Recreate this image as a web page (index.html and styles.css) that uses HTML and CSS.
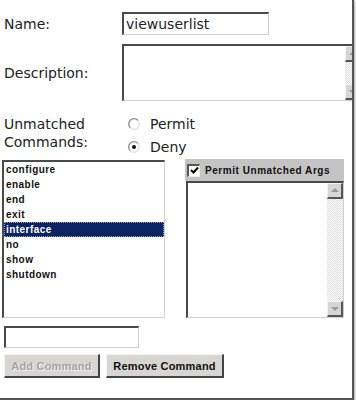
FILE: index.html
```html
<!DOCTYPE html>
<html lang="en">
<head>
  <meta charset="UTF-8">
  <title>Command Set</title>
  <link rel="stylesheet" href="styles.css">
</head>
<body>
  <div class="marco">
    <div class="fila fila-nombre">
      <span class="etiqueta">Name:</span>
      <input class="campo campo-nombre" type="text" value="viewuserlist">
    </div>

    <div class="fila fila-desc">
      <span class="etiqueta">Description:</span>
      <div class="area">
        <div class="barra">
          <span class="flecha arriba"></span>
          <span class="pista"></span>
          <span class="flecha abajo"></span>
        </div>
      </div>
    </div>

    <div class="fila fila-radios">
      <span class="etiqueta etiqueta-doble">Unmatched<br>Commands:</span>
      <div class="radios">
        <div class="opcion">
          <svg class="radio" width="12" height="12" viewBox="0 0 12 12">
            <defs>
              <linearGradient id="rg" x1="0" y1="0" x2="1" y2="1">
                <stop offset="0.45" stop-color="#8a8a8a"/>
                <stop offset="0.55" stop-color="#e2e2e2"/>
              </linearGradient>
            </defs>
            <circle cx="6" cy="6" r="5.3" fill="#fff" stroke="url(#rg)" stroke-width="1.3"/>
          </svg>
          <span>Permit</span>
        </div>
        <div class="opcion">
          <svg class="radio" width="12" height="12" viewBox="0 0 12 12">
            <circle cx="6" cy="6" r="5.3" fill="#fff" stroke="url(#rg)" stroke-width="1.3"/>
            <circle cx="6" cy="6" r="2" fill="#111"/>
          </svg>
          <span>Deny</span>
        </div>
      </div>
    </div>

    <div class="listas">
      <div class="lista">
        <div class="item">configure</div>
        <div class="item">enable</div>
        <div class="item">end</div>
        <div class="item">exit</div>
        <div class="item sel">interface</div>
        <div class="item">no</div>
        <div class="item">show</div>
        <div class="item">shutdown</div>
      </div>

      <div class="args">
        <div class="args-cab">
          <span class="check">
            <svg width="9" height="9" viewBox="0 0 9 9"><path d="M1 4 L3.5 6.5 L8 1.5" fill="none" stroke="#000" stroke-width="2"/></svg>
          </span>
          <span>Permit Unmatched Args</span>
        </div>
        <div class="args-caja">
          <div class="barra barra-larga">
            <span class="flecha arriba"></span>
            <span class="pista"></span>
            <span class="flecha abajo"></span>
          </div>
        </div>
      </div>
    </div>

    <input class="campo campo-cmd" type="text">

    <div class="botones">
      <button class="boton desactivado" disabled>Add Command</button>
      <button class="boton">Remove Command</button>
    </div>
  </div>
</body>
</html>
```

FILE: styles.css
```css
body {
  margin: 0;
  background: #fff;
  font-family: "DejaVu Sans", Verdana, sans-serif;
  color: #222;
}
.marco {
  width: 352px;
  height: 398px;
  border-right: 2px solid #555;
  border-bottom: 2px solid #555;
  box-shadow: 1px 1px 2px rgba(0, 0, 0, 0.35);
  overflow: hidden;
  box-sizing: content-box;
}
.fila {
  display: flex;
  align-items: center;
}
.etiqueta {
  width: 122px;
  flex: none;
  padding-left: 4px;
  box-sizing: border-box;
  font-size: 14px;
}
.etiqueta-doble {
  align-self: flex-start;
  line-height: 18px;
  margin-top: 1px;
}
.campo {
  display: block;
  box-sizing: border-box;
  margin: 0;
  border-style: solid;
  border-width: 2px 1px 1px 2px;
  border-color: #4a4a4a #d0d0d0 #d0d0d0 #4a4a4a;
  background: #fff;
  font-family: "DejaVu Sans", Verdana, sans-serif;
  font-size: 14px;
  color: #222;
  padding: 0 2px;
  outline: none;
}
.fila-nombre {
  padding-top: 12px;
}
.campo-nombre {
  width: 147px;
  height: 23px;
}
.fila-desc {
  margin-top: 9px;
}
.area {
  width: 240px;
  height: 57px;
  flex: none;
  box-sizing: border-box;
  border-style: solid;
  border-width: 2px 1px 1px 2px;
  border-color: #4a4a4a #d0d0d0 #d0d0d0 #4a4a4a;
  display: flex;
  justify-content: flex-end;
}
.barra {
  width: 16px;
  display: flex;
  flex-direction: column;
  background: repeating-conic-gradient(#fff 0 25%, #dedede 0 50%) 0 0 / 2px 2px;
}
.pista {
  flex: 1;
}
.flecha {
  height: 16px;
  box-sizing: border-box;
  background: #d6d6d6;
  border-style: solid;
  border-width: 1px 2px 2px 1px;
  border-color: #f4f4f4 #555 #555 #f4f4f4;
  position: relative;
}
.flecha::after {
  content: "";
  position: absolute;
  left: 3px;
  top: 4px;
  border-left: 4px solid transparent;
  border-right: 4px solid transparent;
}
.arriba::after {
  border-bottom: 4px solid #9a9a9a;
}
.abajo::after {
  border-top: 4px solid #9a9a9a;
  top: 5px;
}
.fila-radios {
  margin-top: 13px;
  align-items: flex-start;
}
.radios {
  display: flex;
  flex-direction: column;
  gap: 6px;
  margin-left: 6px;
  margin-top: 1px;
}
.opcion {
  display: flex;
  align-items: center;
  gap: 10px;
  font-size: 14px;
  height: 17px;
}
.radio {
  display: block;
}
.listas {
  display: flex;
  margin-top: 4px;
  margin-left: 2px;
  gap: 20px;
}
.lista {
  width: 163px;
  height: 158px;
  margin-top: 1px;
  box-sizing: border-box;
  border-style: solid;
  border-width: 2px 1px 1px 2px;
  border-color: #4a4a4a #d0d0d0 #d0d0d0 #4a4a4a;
  font-family: "Liberation Sans", Arial, sans-serif;
  font-weight: bold;
  font-size: 10px;
  letter-spacing: 0.45px;
  color: #111;
}
.item {
  height: 15px;
  line-height: 16px;
  padding-left: 2px;
}
.sel {
  background: #0c2462;
  color: #fff;
  outline: 1px dotted #8fa0c8;
  outline-offset: -1px;
}
.args {
  width: 159px;
}
.args-cab {
  height: 22px;
  background: #c4c4c4;
  display: flex;
  align-items: center;
  gap: 5px;
  padding-left: 2px;
  font-family: "Liberation Sans", Arial, sans-serif;
  font-weight: bold;
  font-size: 10px;
  letter-spacing: 0.55px;
  color: #111;
}
.check {
  width: 13px;
  height: 13px;
  box-sizing: border-box;
  background: #fff;
  border-style: solid;
  border-width: 2px 1px 1px 2px;
  border-color: #555 #eee #eee #555;
  display: flex;
  align-items: center;
  justify-content: center;
}
.check svg {
  display: block;
}
.args-caja {
  height: 137px;
  margin-left: 1px;
  width: 158px;
  box-sizing: border-box;
  border-style: solid;
  border-width: 2px 1px 1px 2px;
  border-color: #4a4a4a #d0d0d0 #d0d0d0 #4a4a4a;
  display: flex;
  justify-content: flex-end;
}
.campo-cmd {
  width: 135px;
  height: 22px;
  margin: 8px 0 0 4px;
}
.botones {
  display: flex;
  gap: 6px;
  margin: 6px 0 0 4px;
}
.boton {
  height: 24px;
  box-sizing: border-box;
  background: #d8d6d2;
  border-style: solid;
  border-width: 1px 2px 2px 1px;
  border-color: #f4f4f4 #444 #444 #f4f4f4;
  font-family: "Liberation Sans", Arial, sans-serif;
  font-weight: bold;
  font-size: 11px;
  letter-spacing: 0.2px;
  color: #111;
  padding: 0;
}
.desactivado {
  width: 96px;
  color: #a4a4a4;
  text-shadow: 1px 1px 0 #f2f2f2;
}
.boton:last-child {
  width: 118px;
}
```
